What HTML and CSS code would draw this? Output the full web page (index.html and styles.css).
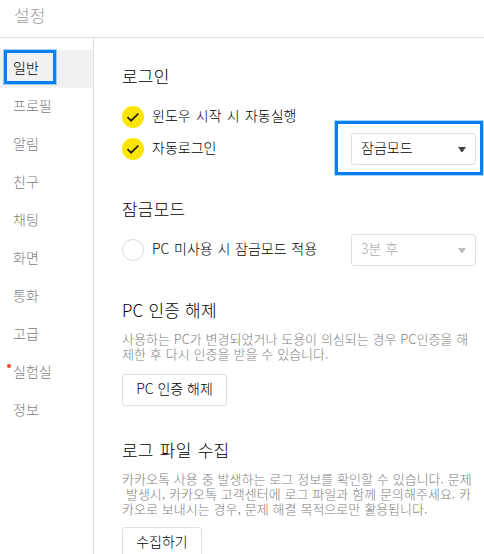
FILE: index.html
```html
<!DOCTYPE html>
<html lang="ko">
<head>
<meta charset="utf-8">
<title>설정</title>
<link rel="stylesheet" href="styles.css">
</head>
<body>
<div class="window">
  <header class="header">설정</header>
  <div class="body">
    <nav class="nav">
      <a class="item active">일반<span class="mark mark-nav"></span></a>
      <a class="item">프로필</a>
      <a class="item">알림</a>
      <a class="item">친구</a>
      <a class="item">채팅</a>
      <a class="item">화면</a>
      <a class="item">통화</a>
      <a class="item">고급</a>
      <a class="item">실험실<span class="dot"></span></a>
      <a class="item">정보</a>
    </nav>
    <main class="main">
      <section class="login">
        <h2>로그인</h2>
        <div class="row">
          <svg class="check" viewBox="0 0 22 22"><circle cx="11" cy="11" r="11" fill="#fee500"/><path d="M5.4 11.2l3.7 3.5 7.2-7" fill="none" stroke="#222" stroke-width="1.8"/></svg>
          <span class="label l1">윈도우 시작 시 자동실행</span>
        </div>
        <div class="row">
          <svg class="check" viewBox="0 0 22 22"><circle cx="11" cy="11" r="11" fill="#fee500"/><path d="M5.4 11.2l3.7 3.5 7.2-7" fill="none" stroke="#222" stroke-width="1.8"/></svg>
          <span class="label">자동로그인</span>
          <div class="select">잠금모드<svg class="arrow" viewBox="0 0 8 5"><path d="M0 0h8L4.6 5h-1.2z" fill="currentColor"/></svg><span class="mark mark-select"></span></div>
        </div>
      </section>
      <section class="lock">
        <h2>잠금모드</h2>
        <div class="row">
          <svg class="check" viewBox="0 0 22 22"><circle cx="11" cy="11" r="10.5" fill="#fff" stroke="#d9d9d9"/></svg>
          <span class="label l2">PC 미사용 시 잠금모드 적용</span>
          <div class="select disabled">3분 후<svg class="arrow" viewBox="0 0 8 5"><path d="M0 0h8L4.6 5h-1.2z" fill="currentColor"/></svg></div>
        </div>
      </section>
      <section class="auth">
        <h2 class="t3">PC 인증 해제</h2>
        <p><span class="d1">사용하는 PC가 변경되었거나 도용이 의심되는 경우 PC인증을 해</span><span class="d2">제한 후 다시 인증을 받을 수 있습니다.</span></p>
        <button class="b1">PC 인증 해제</button>
      </section>
      <section class="log">
        <h2 class="t4">로그 파일 수집</h2>
        <p><span class="d3">카카오톡 사용 중 발생하는 로그 정보를 확인할 수 있습니다. 문제</span><span class="d4"> 발생시, 카카오톡 고객센터에 로그 파일과 함께 문의해주세요. 카</span><span class="d5">카오로 보내시는 경우, 문제 해결 목적으로만 활용됩니다.</span></p>
        <button class="b2">수집하기</button>
      </section>
    </main>
  </div>
</div>
</body>
</html>
```
FILE: styles.css
```css
* { box-sizing: border-box; }
body { margin: 0; overflow: hidden; background: #fff; color: #000; font: 300 14px/20px "Noto Sans CJK KR", sans-serif; }
.window { height: 554px; display: flex; flex-direction: column; overflow: hidden; }
.header { flex: none; height: 38px; border-bottom: 1px solid #e0e0e0; padding: 3px 14px 0; font-size: 17px; line-height: 24px; color: #a0a0a0; }
.body { flex: 1; min-height: 0; display: flex; }
.nav { flex: none; width: 94px; border-right: 1px solid #e0e0e0; padding-top: 12px; }
.item { display: block; position: relative; height: 38px; padding-left: 13px; line-height: 34px; color: #808080; }
.active { background: #f1f1f1; color: #000; }
.mark { position: absolute; border: 3px solid #0580f2; box-shadow: 0 0 0 1px rgba(5, 128, 242, .35); }
.mark-nav { left: 4px; top: 0; width: 52px; height: 34px; }
.mark-select { left: -17px; top: -13px; width: 148px; height: 54px; }
.dot { position: absolute; left: 7px; top: 10px; width: 4px; height: 4px; border-radius: 50%; background: #f0452d; }
.main { flex: 1; min-width: 0; padding: 26px 8px 0 28px; }
h2 { margin: 0 0 13px; font-size: 17px; font-weight: 300; line-height: 24px; white-space: nowrap; letter-spacing: .2px; }
section { margin-bottom: 32px; }
.row { height: 32px; display: flex; align-items: center; }
.check { flex: none; width: 22px; height: 22px; margin-right: 8px; }
.label { margin-top: -4px; white-space: nowrap; }
.l1 { word-spacing: 1.3px; }
.l2 { word-spacing: .8px; }
.select { position: relative; margin-left: auto; width: 125px; height: 32px; display: flex; align-items: center; justify-content: space-between; padding: 0 9px 4px; border: 1px solid #dfdfdf; border-radius: 3px; }
.disabled { color: #aaa; }
.arrow { width: 8px; height: 5px; margin-top: 5px; color: #444; }
.disabled .arrow { color: #bbb; }
.auth h2, .log h2 { margin-bottom: 9px; }
.t4 { word-spacing: 1.2px; }
p { margin: 0 0 13px; font-size: 13px; line-height: 15px; color: #808080; }
p span { display: block; width: max-content; white-space: pre; }
.d1 { word-spacing: .2px; }
.d2, .d3, .d4, .d5 { word-spacing: .3px; }
.log p { margin-bottom: 11px; }
button { display: block; height: 32px; padding: 0 0 4px; border: 1px solid #dfdfdf; border-radius: 3px; background: #fff; color: #000; font: inherit; white-space: nowrap; }
.b1 { width: 105px; }
.b2 { width: 80px; }
```
